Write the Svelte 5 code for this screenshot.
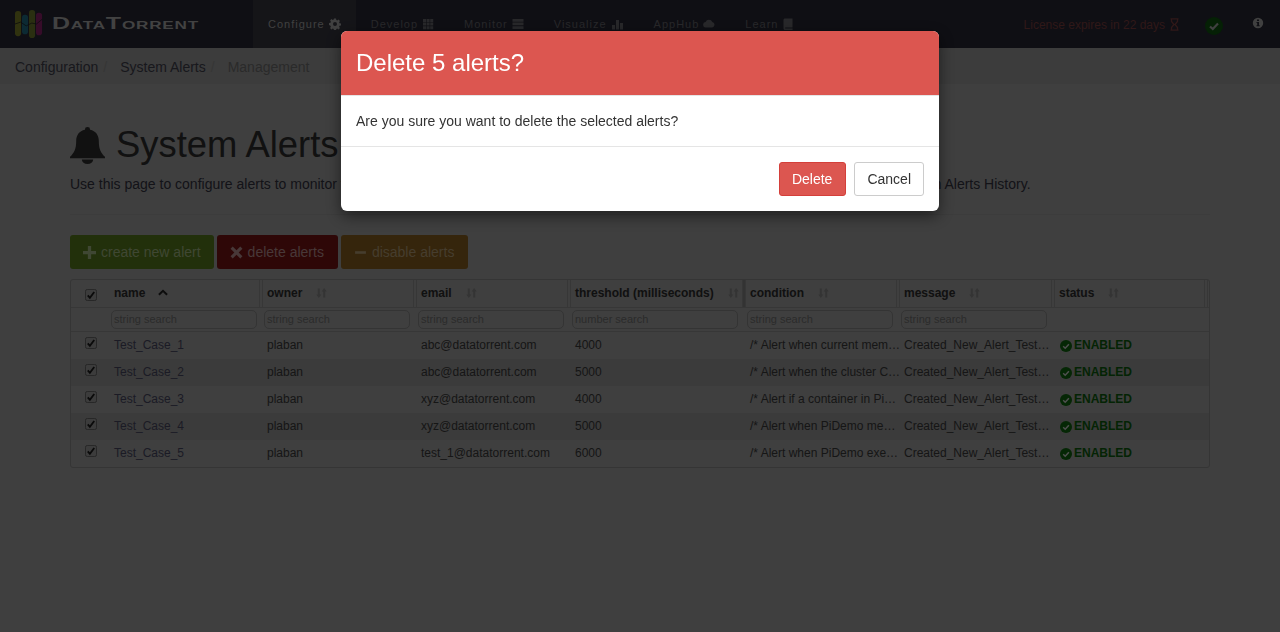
<script>
  const navItems = [
    { label: 'Configure', icon: 'gear', active: true },
    { label: 'Develop', icon: 'grid' },
    { label: 'Monitor', icon: 'server' },
    { label: 'Visualize', icon: 'bars' },
    { label: 'AppHub', icon: 'cloud' },
    { label: 'Learn', icon: 'book' }
  ];

  const columns = [
    { label: 'name', placeholder: 'string search', sorted: true },
    { label: 'owner', placeholder: 'string search' },
    { label: 'email', placeholder: 'string search' },
    { label: 'threshold (milliseconds)', placeholder: 'number search' },
    { label: 'condition', placeholder: 'string search' },
    { label: 'message', placeholder: 'string search' },
    { label: 'status' }
  ];

  const message = 'Created_New_Alert_Test_Case_Notification';
  const rows = [
    { name: 'Test_Case_1', email: 'abc@datatorrent.com', threshold: 4000, condition: '/* Alert when current memory usage is high */' },
    { name: 'Test_Case_2', email: 'abc@datatorrent.com', threshold: 5000, condition: '/* Alert when the cluster CPU usage is high */' },
    { name: 'Test_Case_3', email: 'xyz@datatorrent.com', threshold: 4000, condition: '/* Alert if a container in PiDemo is killed */' },
    { name: 'Test_Case_4', email: 'xyz@datatorrent.com', threshold: 5000, condition: '/* Alert when PiDemo memory usage is high */' },
    { name: 'Test_Case_5', email: 'test_1@datatorrent.com', threshold: 6000, condition: '/* Alert when PiDemo executes too long */' }
  ];
</script>

{#snippet navIcon(kind)}
  <svg class="nav-icon" viewBox="0 0 12 12" aria-hidden="true">
    {#if kind === 'gear'}
      <path fill-rule="evenodd" d="M5 .5h2l.3 1.5 1 .4 1.3-.8 1.3 1.3-.8 1.3.4 1 1.5.3v2l-1.5.3-.4 1 .8 1.3-1.3 1.3-1.3-.8-1 .4-.3 1.5H5l-.3-1.5-1-.4-1.3.8-1.3-1.3.8-1.3-.4-1L0 7V5l1.5-.3.4-1-.8-1.3 1.3-1.3 1.3.8 1-.4zM6 4a2 2 0 1 0 0 4 2 2 0 0 0 0-4z" />
    {:else if kind === 'grid'}
      <path d="M1 1h3v3H1zM4.6 1h3v3h-3zM8.2 1h3v3h-3zM1 4.6h3v3H1zM4.6 4.6h3v3h-3zM8.2 4.6h3v3h-3zM1 8.2h3v3H1zM4.6 8.2h3v3h-3zM8.2 8.2h3v3h-3z" />
    {:else if kind === 'server'}
      <path d="M.5 1h11v2.7H.5zM.5 4.6h11v2.7H.5zM.5 8.2h11V11H.5z" />
    {:else if kind === 'bars'}
      <path d="M.5 7h3v4.5h-3zM4.5 2h3v9.5h-3zM8.5 5h3v6.5h-3z" />
    {:else if kind === 'cloud'}
      <path d="M3 9.5a2.7 2.7 0 0 1-.4-5.4A3.6 3.6 0 0 1 9.3 4a2.8 2.8 0 0 1-.1 5.5z" />
    {:else}
      <path d="M3 .5h7.5v9H3.6c-.5 0-.6.3-.6.6s.1.5.6.5h7V12H3C2 12 1.500 11.300 1.500 10.500V2C1.500 1 2 .5 3 .5z" />
    {/if}
  </svg>
{/snippet}

{#snippet checkbox()}
  <svg class="check" viewBox="0 0 13 13" role="img" aria-label="checked">
    <rect x=".5" y=".5" width="12" height="12" rx="2" />
    <path d="M3 6.800 5.300 9.500 10 3.200" />
  </svg>
{/snippet}

{#snippet sortIcon()}
  <svg class="sort" viewBox="0 0 11 11" aria-hidden="true">
    <path d="M1.800 1h2v6h1.500L2.800 10.500.3 7h1.500zM7.200 10h2V4h1.500L8.200.5 5.700 4h1.500z" />
  </svg>
{/snippet}

<div class="page">
  <header class="navbar">
    <div class="brand">
      <svg class="logo" viewBox="0 0 30 30" aria-hidden="true">
        <rect x="0" y="1" width="6.500" height="27" rx="3" fill="#8d9418" />
        <rect x="7.500" y="5" width="6.500" height="21" rx="3" fill="#157a90" />
        <rect x="15" y="0" width="6.500" height="30" rx="3" fill="#7a8a20" />
        <rect x="22.500" y="3" width="6.500" height="24" rx="3" fill="#a01770" />
        <path d="M0 15l6-2 6 4 6-3 5 1 6-5" fill="none" stroke="#111" stroke-width=".8" />
      </svg>
      <span class="brand-name">DataTorrent</span>
    </div>
    <nav class="nav">
      {#each navItems as item}
        <a class="nav-item" class:active={item.active} href="#top">
          {item.label}
          {@render navIcon(item.icon)}
        </a>
      {/each}
    </nav>
    <div class="nav-right">
      <span class="license">
        License expires in 22 days
        <svg class="hourglass" viewBox="0 0 9 13" aria-hidden="true">
          <path d="M.5.8h8M.5 12.200h8M1.500 1v2.500L4 6.500 1.500 9.500V12M7.500 1v2.500L5 6.500l2.500 3V12" />
        </svg>
      </span>
      <span class="health">
        <svg viewBox="0 0 18 18" aria-hidden="true">
          <circle cx="9" cy="9" r="9" fill="#0a400a" />
          <path d="M5 9.500 7.800 12 13 6.500" fill="none" stroke="#808080" stroke-width="2.200" />
        </svg>
      </span>
      <svg class="info" viewBox="0 0 12 12" aria-hidden="true">
        <path fill-rule="evenodd" d="M6 .8a5.200 5.200 0 1 0 0 10.400A5.200 5.200 0 0 0 6 .8zM5 2.500h2v1.500H5zM4.500 5h2.500v3.200h.7v1H4.500v-1h.7V6h-.7z" />
      </svg>
    </div>
  </header>

  <div class="breadcrumb">
    <a href="#top">Configuration</a>
    <span class="sep">/</span>
    <a href="#top">System Alerts</a>
    <span class="sep">/</span>
    <span class="current">Management</span>
  </div>

  <main class="content">
    <h1>
      <svg class="bell" viewBox="0 0 34 36" aria-hidden="true">
        <path d="M17 0a2.500 2.500 0 0 1 2.500 2.700C25 3.800 28 8 28 13.500c0 8 2 11.500 6 15.500v1.500H0V29c4-4 6-7.500 6-15.500C6 8 9 3.800 14.500 2.700A2.500 2.500 0 0 1 17 0z" />
        <path d="M11.500 31.500a5.500 4.500 0 0 0 11 0z" />
      </svg>
      System Alerts
    </h1>
    <p class="lead">Use this page to configure alerts to monitor the health of your cluster, and applications. To see alerts that were triggered earlier, go to System Alerts History.</p>
    <hr />

    <div class="actions">
      <button class="btn green">
        <svg viewBox="0 0 12 12" aria-hidden="true"><path d="M4.500 0h3v4.500H12v3H7.500V12h-3V7.500H0v-3h4.500z" /></svg>
        create new alert
      </button>
      <button class="btn red">
        <svg viewBox="0 0 12 12" aria-hidden="true"><path d="M2.500.5 6 4 9.500.5l2 2L8 6l3.500 3.500-2 2L6 8l-3.500 3.500-2-2L4 6 .5 2.500z" /></svg>
        delete alerts
      </button>
      <button class="btn orange">
        <svg viewBox="0 0 12 12" aria-hidden="true"><path d="M1 4.800h10v2.400H1z" /></svg>
        disable alerts
      </button>
    </div>

    <div class="table">
      <div class="row head">
        <div class="cell select">{@render checkbox()}</div>
        {#each columns as col, i}
          <div class="cell th">
            <span class="th-label">{col.label}</span>
            {#if col.sorted}
              <svg class="chevron" viewBox="0 0 11 7" aria-hidden="true"><path d="M1 6 5.500 1.700 10 6" /></svg>
            {:else}
              {@render sortIcon()}
            {/if}
            <span class="handle" class:wide={i === 3}></span>
          </div>
        {/each}
      </div>
      <div class="row filters">
        <div class="cell"></div>
        {#each columns as col}
          <div class="cell filter">
            {#if col.placeholder}
              <input placeholder={col.placeholder} />
            {/if}
          </div>
        {/each}
      </div>
      {#each rows as row}
        <div class="row body">
          <div class="cell select">{@render checkbox()}</div>
          <div class="cell td"><a href="#top">{row.name}</a></div>
          <div class="cell td">plaban</div>
          <div class="cell td">{row.email}</div>
          <div class="cell td">{row.threshold}</div>
          <div class="cell td condition">{row.condition}</div>
          <div class="cell td">{message}</div>
          <div class="cell td status">
            <svg viewBox="0 0 12 12" aria-hidden="true">
              <circle cx="6" cy="6" r="6" fill="#0a4e0a" />
              <path d="M3.200 6.300 5.200 8.200 8.900 4.200" fill="none" stroke="#a0a0a0" stroke-width="1.500" />
            </svg>
            ENABLED
          </div>
        </div>
      {/each}
    </div>
  </main>
</div>

<div class="backdrop"></div>

<div class="modal" role="dialog" aria-modal="true" aria-labelledby="modal-title">
  <div class="modal-header">
    <h4 id="modal-title">Delete 5 alerts?</h4>
  </div>
  <div class="modal-body">Are you sure you want to delete the selected alerts?</div>
  <div class="modal-footer">
    <button class="modal-btn danger">Delete</button>
    <button class="modal-btn">Cancel</button>
  </div>
</div>

<style>
  :global(body) {
    margin: 0;
    background: #7e7e7e;
    font-family: "Liberation Sans", Arial, sans-serif;
    font-size: 14px;
    color: #2a2a2a;
    overflow: hidden;
  }
  a {
    text-decoration: none;
    color: inherit;
  }
  .page {
    height: 632px;
  }

  /* top bar */
  .navbar {
    height: 48px;
    background: #1e1e28;
    display: flex;
    align-items: stretch;
  }
  .brand {
    width: 253px;
    display: flex;
    align-items: center;
    gap: 9px;
    padding-left: 15px;
    box-sizing: border-box;
  }
  .logo {
    width: 28px;
    height: 30px;
    opacity: 0.6;
  }
  .brand-name {
    display: inline-block;
    font-variant: small-caps;
    font-weight: 700;
    font-size: 16px;
    letter-spacing: 0.5px;
    color: #858585;
    transform: scaleX(1.56);
    transform-origin: left center;
  }
  .nav {
    display: flex;
  }
  .nav-item {
    display: flex;
    align-items: center;
    gap: 4px;
    padding: 0 15px;
    font-size: 11px;
    letter-spacing: 1px;
    color: #505055;
  }
  .nav-item.active {
    background: #2a2a31;
    color: #808080;
  }
  .nav-icon {
    width: 12px;
    height: 12px;
    fill: currentColor;
  }
  .nav-item:nth-child(4) .nav-icon {
    width: 13px;
  }
  .nav-right {
    margin-left: auto;
    display: flex;
    align-items: center;
  }
  .license {
    display: flex;
    align-items: center;
    gap: 5px;
    margin-top: 1px;
    font-size: 12px;
    color: #603030;
  }
  .hourglass {
    width: 9px;
    height: 13px;
    fill: none;
    stroke: #603030;
    stroke-width: 1.300;
  }
  .health {
    display: flex;
    margin: 4px 0 0 26px;
    width: 18px;
    height: 18px;
  }
  .info {
    width: 12px;
    height: 12px;
    fill: #808080;
    margin: 0 16px 2px 29px;
  }

  .breadcrumb {
    height: 36px;
    box-sizing: border-box;
    background: #787878;
    padding: 2px 15px 0;
    display: flex;
    align-items: center;
    color: #303038;
  }
  .breadcrumb .sep {
    margin: 0 13px 0 5px;
    color: #6c6c6c;
  }
  .breadcrumb .current {
    color: #555;
  }

  .content {
    padding: 0 70px;
  }
  h1 {
    margin: 0;
    padding-top: 43px;
    height: 36px;
    display: flex;
    align-items: center;
    gap: 11px;
    font-size: 36.4px;
    font-weight: 400;
    line-height: 40px;
    color: #222;
  }
  .bell {
    width: 35px;
    height: 37px;
    fill: #222;
  }
  .lead {
    margin: 0;
    padding-top: 11px;
    line-height: 20px;
    white-space: nowrap;
    color: #262630;
  }
  hr {
    border: 0;
    border-top: 1px solid #787878;
    margin: 20px 0 20px;
  }

  .actions {
    display: flex;
    gap: 3px;
  }
  .btn {
    height: 34px;
    padding: 0 12px;
    border-radius: 3px;
    border: 1px solid transparent;
    display: flex;
    align-items: center;
    gap: 5px;
    font: 14px "Liberation Sans", Arial, sans-serif;
  }
  .btn svg {
    width: 13px;
    height: 13px;
    fill: currentColor;
  }
  .green {
    background: #456017;
    color: #7f8f66;
  }
  .red {
    background: #5c0f0f;
    padding-right: 13px;
    color: #907070;
  }
  .orange {
    background: #6a4a18;
    padding-right: 13px;
    color: #8c7a5c;
  }

  /* table */
  .table {
    margin-top: 10px;
    border: 1px solid #6a6a6a;
    border-radius: 3px;
  }
  .row {
    display: grid;
    grid-template-columns: 39px 153px 154px 154px 175px 154px 155px 1fr;
    border-bottom: 1px solid #6e6e6e;
  }
  .row.body {
    border-bottom: 0;
    height: 27px;
  }
  .row.body:nth-child(even) {
    background: #767676;
  }
  .row.head {
    height: 27px;
  }
  .row.filters {
    height: 23px;
  }
  .cell {
    min-width: 0;
    box-sizing: border-box;
  }
  .select {
    padding: 5px 0 0 14px;
  }
  .check {
    display: block;
    width: 12px;
    height: 12px;
  }
  .head .check {
    margin-top: 4px;
  }
  .check rect {
    fill: #787878;
    stroke: #4a4a4a;
  }
  .check path {
    fill: none;
    stroke: #141414;
    stroke-width: 2;
  }
  .th {
    display: flex;
    align-items: center;
    padding-left: 4px;
    font-size: 12px;
    font-weight: 700;
    color: #222;
  }
  .th-label {
    margin: 0 14px 2px 0;
  }
  .sort {
    width: 11px;
    height: 12px;
    margin-bottom: 2px;
    fill: #686868;
  }
  .chevron {
    width: 10px;
    height: 7px;
    margin: 0 0 2px -1px;
    fill: none;
    stroke: #1a1a1a;
    stroke-width: 2.200;
  }
  .handle {
    margin-left: auto;
    align-self: stretch;
    width: 4px;
    box-sizing: border-box;
    border: solid #6e6e6e;
    border-width: 0 1px;
  }
  .handle.wide {
    background: #666;
  }
  .th:last-child .handle {
    margin-right: 1px;
  }
  .filter {
    padding: 2px 0 0 1px;
  }
  .filter input {
    display: block;
    box-sizing: border-box;
    width: 146px;
    height: 19px;
    padding: 0 2px 2px;
    border: 1px solid #686868;
    border-radius: 5px;
    background: transparent;
    font: 11px "Liberation Sans", Arial, sans-serif;
  }
  .filter input::placeholder {
    color: #565656;
    opacity: 1;
  }
  .filter:nth-child(5) input {
    width: 166px;
  }
  .td {
    padding: 0 4px;
    font-size: 12px;
    line-height: 26px;
    white-space: nowrap;
    overflow: hidden;
    text-overflow: ellipsis;
    color: #2c2c2c;
  }
  .td.condition {
    padding-right: 0;
    margin-right: -4px;
  }
  .td a {
    color: #36364a;
  }
  .status {
    display: flex;
    align-items: flex-start;
    gap: 2px;
    padding-left: 5px;
    font-weight: 700;
    color: #084808;
  }
  .status svg {
    flex: none;
    width: 12px;
    height: 12px;
    margin-top: 8px;
  }

  /* dialog on top of everything */
  .backdrop {
    position: fixed;
    inset: 0;
    background: rgba(0, 0, 0, 0.5);
  }
  .modal {
    position: fixed;
    top: 31px;
    left: 341px;
    width: 598px;
    background: #fff;
    border-radius: 6px;
    box-shadow: 0 5px 15px rgba(0, 0, 0, 0.5);
    color: #333;
  }
  .modal-header {
    background: #dc5650;
    border-bottom: 1px solid #e5e5e5;
    border-radius: 6px 6px 0 0;
    padding: 15px;
  }
  .modal-header h4 {
    margin: 0;
    font-size: 24px;
    font-weight: 400;
    line-height: 34px;
    color: #fff;
  }
  .modal-body {
    padding: 15px;
    line-height: 20px;
  }
  .modal-footer {
    border-top: 1px solid #e5e5e5;
    padding: 15px;
    display: flex;
    justify-content: flex-end;
    gap: 8px;
  }
  .modal-btn {
    height: 34px;
    padding: 0 12px;
    background: #fff;
    border: 1px solid #ccc;
    border-radius: 3px;
    color: #333;
    font: 14px "Liberation Sans", Arial, sans-serif;
  }
  .modal-btn.danger {
    padding: 0 13px 0 12px;
    background: #dc5650;
    border-color: #d43f3a;
    color: #fff;
  }
</style>
